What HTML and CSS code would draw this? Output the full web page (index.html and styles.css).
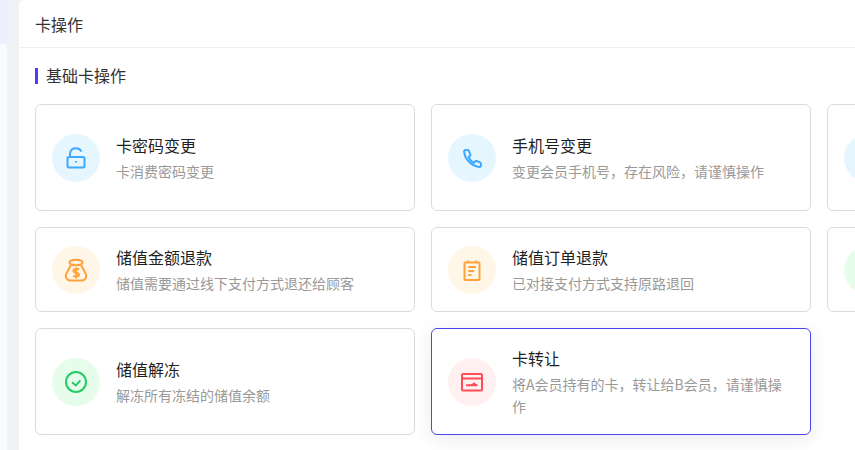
FILE: index.html
```html
<!DOCTYPE html>
<html lang="zh-CN">
<head>
<meta charset="utf-8">
<title>卡操作</title>
<link rel="stylesheet" href="styles.css">
</head>
<body>
<div class="app">
  <aside class="side"><div class="side-active"></div></aside>
  <main class="panel">
    <header class="panel-head">卡操作</header>
    <section class="section">
      <h2 class="section-title">基础卡操作</h2>
      <div class="grid">
        <div class="card">
          <div class="badge blue">
            <svg class="ico" viewBox="0 0 48 48"><rect x="15.500" y="23" width="17" height="10.500" rx="1.500"/><path d="M18 23v-3a6 6 0 0 1 11.400-2.400"/><path d="M24 27v1.600"/></svg>
          </div>
          <div class="body"><div class="name">卡密码变更</div><div class="desc">卡消费密码变更</div></div>
        </div>
        <div class="card">
          <div class="badge blue">
            <svg class="ico" viewBox="0 0 48 48"><path d="M17.600 16h2.200a1 1 0 0 1 .9.6l1.700 4a1 1 0 0 1-.3 1.200l-1.500 1.300c1.100 2.600 3 4.500 5.400 5.700l1.400-1.500a1 1 0 0 1 1.200-.3l3.700 1.700a1 1 0 0 1 .6.9v1.900a1.500 1.500 0 0 1-1.700 1.500C23.200 31.800 17 25.500 16.100 17.600A1.500 1.500 0 0 1 17.600 16z"/></svg>
          </div>
          <div class="body"><div class="name">手机号变更</div><div class="desc">变更会员手机号，存在风险，请谨慎操作</div></div>
        </div>
        <div class="card">
          <div class="badge blue"></div>
        </div>
        <div class="card">
          <div class="badge orange">
            <svg class="ico" viewBox="0 0 48 48"><ellipse cx="24" cy="16.500" rx="6.500" ry="2.800"/><path d="M19 19l-4.600 8.500c-1.800 3.500.2 7 4 7h11.200c3.800 0 5.800-3.500 4-7L29 19"/><path d="M27 23.500c-1-.8-5.500-1.200-5.500 1.200 0 2.600 5.500 1.400 5.500 4 0 2.400-4.500 2-5.800 1"/><path d="M24.200 21.500v11"/></svg>
          </div>
          <div class="body"><div class="name">储值金额退款</div><div class="desc">储值需要通过线下支付方式退还给顾客</div></div>
        </div>
        <div class="card">
          <div class="badge orange">
            <svg class="ico" viewBox="0 0 48 48"><rect x="16.500" y="16.500" width="15" height="17.500" rx="1"/><path d="M20 14.500v2.500M28 14.500v2.500M20.300 21h7.700M20.300 25h5.700M20.300 29h3.200"/></svg>
          </div>
          <div class="body"><div class="name">储值订单退款</div><div class="desc">已对接支付方式支持原路退回</div></div>
        </div>
        <div class="card">
          <div class="badge green"></div>
        </div>
        <div class="card">
          <div class="badge green">
            <svg class="ico" viewBox="0 0 48 48"><circle cx="24" cy="24" r="10"/><path d="M20 24.200l3.800 3.200 4.600-5"/></svg>
          </div>
          <div class="body"><div class="name">储值解冻</div><div class="desc">解冻所有冻结的储值余额</div></div>
        </div>
        <div class="card active">
          <div class="badge red">
            <svg class="ico" viewBox="0 0 48 48"><rect x="14" y="16" width="20" height="16.500" rx="1"/><path d="M14 20.500h20M18 27.300h11.500"/><path class="fill" d="M22.500 27.300l3.500-3 3.500 3z"/></svg>
          </div>
          <div class="body"><div class="name">卡转让</div><div class="desc">将A会员持有的卡，转让给B会员，请谨慎操作</div></div>
        </div>
      </div>
    </section>
  </main>
</div>
</body>
</html>
```

FILE: styles.css
```css
* { box-sizing: border-box; }
html, body { margin: 0; height: 100%; overflow: hidden; }
body {
  background: #f0f2f5;
  font-family: "Noto Sans CJK SC", "Noto Sans", sans-serif;
  color: #333;
}
.app { display: flex; height: 450px; gap: 12px; }
.side { flex: 0 0 7px; background: #fafbff; }
.side-active { height: 44px; background: #eeeffd; }
.panel {
  flex: 1;
  min-width: 0;
  background: #fff;
  border-top-left-radius: 6px;
  overflow: hidden;
}
.panel-head {
  height: 48px;
  padding: 0 16px;
  border-bottom: 1px solid #f0f0f2;
  font-size: 16px;
  line-height: 48px;
}
.section { padding: 20px 16px 0; }
.section-title {
  margin: 0;
  padding: 0 0 2px 8px;
  border-left: 3px solid #4a40f0;
  font-size: 16px;
  font-weight: 400;
  line-height: 14px;
}
.grid {
  display: grid;
  grid-template-columns: repeat(3, 380px);
  grid-template-rows: 107px 85px 107px;
  gap: 16px;
  margin-top: 20px;
}
.card {
  display: flex;
  align-items: center;
  gap: 16px;
  padding: 0 16px;
  border: 1px solid #dcdcdf;
  border-radius: 6px;
  background: #fff;
}
.card.active {
  border-color: #4b45f0;
  box-shadow: 0 4px 20px rgba(30, 30, 60, 0.09);
}
.badge {
  flex: 0 0 48px;
  height: 48px;
  border-radius: 50%;
}
.blue { background: #e6f6ff; color: #3fa9ff; }
.orange { background: #fff6e7; color: #ffa23c; }
.green { background: #e7fdec; color: #22cc66; }
.red { background: #fff1f1; color: #ff4d55; }
.ico {
  display: block;
  width: 48px;
  height: 48px;
  fill: none;
  stroke: currentColor;
  stroke-width: 2;
}
.ico .fill { fill: currentColor; stroke: none; }
.body { min-width: 0; flex: 1; }
.name {
  font-size: 16px;
  line-height: 24px;
  color: #1f1f1f;
}
.desc {
  margin-top: 3px;
  font-size: 14px;
  line-height: 22px;
  color: #999;
}
```
